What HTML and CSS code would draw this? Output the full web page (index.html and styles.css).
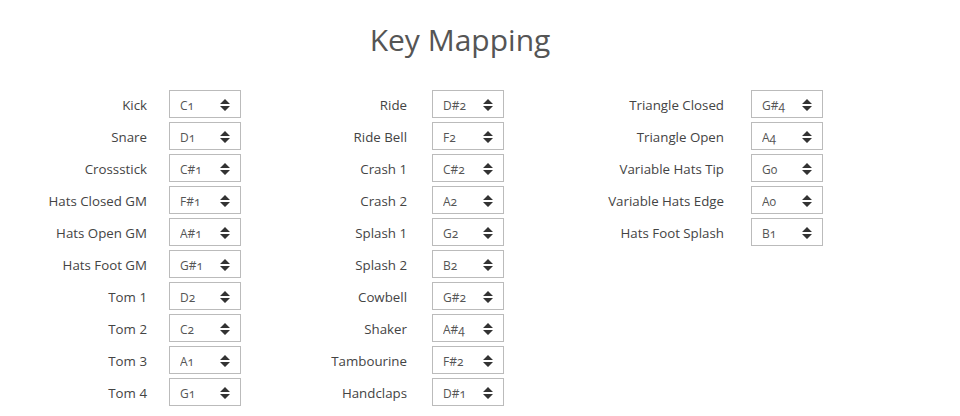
FILE: index.html
```html
<!DOCTYPE html>
<html lang="en">
<head>
    <meta charset="UTF-8">
    <meta name="viewport" content="width=device-width, initial-scale=1.0">
    <title>Key Mapping</title>
    <link rel="stylesheet" href="styles.css">
</head>
<body>
    <h1 class="title">Key Mapping</h1>
    <div class="mapping">
        <div class="group group-1">
            <label>Kick</label><div class="pick"><select><option>C1</option></select></div>
            <label>Snare</label><div class="pick"><select><option>D1</option></select></div>
            <label>Crossstick</label><div class="pick"><select><option>C#1</option></select></div>
            <label>Hats Closed GM</label><div class="pick"><select><option>F#1</option></select></div>
            <label>Hats Open GM</label><div class="pick"><select><option>A#1</option></select></div>
            <label>Hats Foot GM</label><div class="pick"><select><option>G#1</option></select></div>
            <label>Tom 1</label><div class="pick"><select><option>D2</option></select></div>
            <label>Tom 2</label><div class="pick"><select><option>C2</option></select></div>
            <label>Tom 3</label><div class="pick"><select><option>A1</option></select></div>
            <label>Tom 4</label><div class="pick"><select><option>G1</option></select></div>
        </div>
        <div class="group group-2">
            <label>Ride</label><div class="pick"><select><option>D#2</option></select></div>
            <label>Ride Bell</label><div class="pick"><select><option>F2</option></select></div>
            <label>Crash 1</label><div class="pick"><select><option>C#2</option></select></div>
            <label>Crash 2</label><div class="pick"><select><option>A2</option></select></div>
            <label>Splash 1</label><div class="pick"><select><option>G2</option></select></div>
            <label>Splash 2</label><div class="pick"><select><option>B2</option></select></div>
            <label>Cowbell</label><div class="pick"><select><option>G#2</option></select></div>
            <label>Shaker</label><div class="pick"><select><option>A#4</option></select></div>
            <label>Tambourine</label><div class="pick"><select><option>F#2</option></select></div>
            <label>Handclaps</label><div class="pick"><select><option>D#1</option></select></div>
        </div>
        <div class="group group-3">
            <label>Triangle Closed</label><div class="pick"><select><option>G#4</option></select></div>
            <label>Triangle Open</label><div class="pick"><select><option>A4</option></select></div>
            <label>Variable Hats Tip</label><div class="pick"><select><option>G0</option></select></div>
            <label>Variable Hats Edge</label><div class="pick"><select><option>A0</option></select></div>
            <label>Hats Foot Splash</label><div class="pick"><select><option>B1</option></select></div>
        </div>
    </div>
    <script>
        // add the up/down arrow to every picker
        document.querySelectorAll('.pick').forEach(function (pick) {
            pick.insertAdjacentHTML('beforeend',
                '<svg class="arrows" viewBox="0 0 10 12"><path d="M5 0L10 5H0Z M5 12L0 7H10Z"/></svg>');
        });
    </script>
</body>
</html>
```
FILE: styles.css
```css
body {
    margin: 0;
    background-color: #fff;
    font-family: "Open Sans", "Liberation Sans", sans-serif;
    color: #444;
}
.title {
    margin: 20px 0 29px;
    padding-right: 40px;
    font-size: 30px;
    font-weight: normal;
    line-height: 1.362;
    text-align: center;
    color: #555;
}
.mapping {
    display: flex;
    align-items: flex-start;
}
.group {
    display: grid;
    grid-template-columns: 1fr 72px;
    grid-auto-rows: 28px;
    row-gap: 4px;
    align-items: center;
}
.group-1 {
    width: 241px;
    column-gap: 22px;
}
.group-2 {
    width: 263px;
    column-gap: 25px;
}
.group-3 {
    width: 319px;
    column-gap: 27px;
}
.group label {
    padding-top: 3px;
    text-align: right;
    font-size: 13.3px;
    white-space: nowrap;
}
.pick {
    position: relative;
    height: 28px;
}
.pick select {
    appearance: none;
    -webkit-appearance: none;
    width: 100%;
    height: 100%;
    margin: 0;
    padding: 3px 0 0 10px;
    border: 1px solid #bbb;
    border-radius: 0;
    background-color: #fff;
    font-family: "Open Sans", "Liberation Sans", sans-serif;
    font-size: 12px;
    font-variant-numeric: oldstyle-nums;
    color: #555;
}
.arrows {
    position: absolute;
    right: 11px;
    top: 9px;
    width: 10px;
    height: 12px;
    fill: #333;
    pointer-events: none;
}
```
